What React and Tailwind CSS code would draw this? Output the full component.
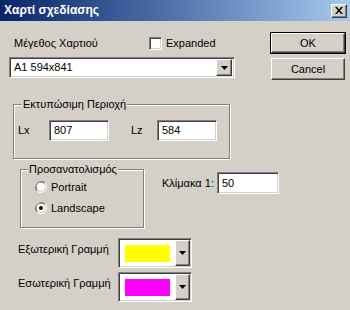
import React from "react";

const raised =
  "border border-t-white border-l-white border-b-[#404040] border-r-[#404040] shadow-[inset_-1px_-1px_0_#808080] bg-[#d4d0c8]";
const sunken =
  "border border-t-[#808080] border-l-[#808080] border-b-white border-r-white shadow-[inset_1px_1px_0_#404040,inset_-1px_-1px_0_#d4d0c8] bg-white";
const etched =
  "border border-[#808080] shadow-[inset_1px_1px_0_#fff,1px_1px_0_#fff]";

const Arrow = () => (
  <svg width="7" height="4" viewBox="0 0 7 4">
    <path d="M0 0h7L3.5 4z" fill="#000" />
  </svg>
);

const DropButton = ({ className }) => (
  <div className={`${raised} ${className} shrink-0 flex items-center justify-center`}>
    <Arrow />
  </div>
);

const Radio = ({ checked }) => (
  <svg width="12" height="12" viewBox="0 0 12 12" className="shrink-0">
    <path d="M10.2 1.8A6 6 0 0 0 1.8 10.2" stroke="#808080" strokeWidth="1" fill="none" />
    <path d="M9.5 2.5A5 5 0 0 0 2.5 9.5" stroke="#404040" strokeWidth="1" fill="none" />
    <circle cx="6" cy="6" r="4.5" fill="#fff" />
    <path d="M1.8 10.2A6 6 0 0 0 10.2 1.8" stroke="#fff" strokeWidth="1" fill="none" />
    <path d="M2.5 9.5A5 5 0 0 0 9.5 2.5" stroke="#d4d0c8" strokeWidth="1" fill="none" />
    {checked && <circle cx="6" cy="6" r="2" fill="#000" />}
  </svg>
);

const ColorRow = ({ label, color }) => (
  <div className="flex items-start">
    <span className="w-[100px] shrink-0 pt-[5px]">{label}</span>
    <div className={`${sunken} w-[74px] h-[30px] shrink-0 flex items-stretch p-[1px]`}>
      <div className="flex-1 pl-[5px] pt-[5px]">
        <div className="w-[45px] h-[17px]" style={{ backgroundColor: color }} />
      </div>
      <DropButton className="w-[15px]" />
    </div>
  </div>
);

export default function App() {
  return (
    <div
      className="w-[350px] h-[310px] bg-[#d4d0c8] text-[11px] leading-[13px] text-black overflow-hidden"
      style={{ fontFamily: "'Liberation Sans', Arial, sans-serif" }}
    >
      {/* title bar */}
      <div className="h-[21px] flex items-center justify-between bg-gradient-to-r from-[#0a246a] to-[#a6caf0] pl-[4px] pr-[3px]">
        <span className="text-white font-bold text-[12px]">Χαρτί σχεδίασης</span>
        <div className={`${raised} w-[16px] h-[14px] flex items-center justify-center`}>
          <svg width="8" height="7" viewBox="0 0 8 7">
            <path d="M0 0h2l2 2.5L6 0h2L5 3.5 8 7H6L4 4.5 2 7H0l3-3.5z" fill="#000" />
          </svg>
        </div>
      </div>

      <div className="flex">
        {/* left column */}
        <div className="ml-[9px] w-[261px] shrink-0 flex flex-col">
          <div className="mt-[16px] h-[13px] flex items-center">
            <span className="w-[140px] shrink-0 pl-[5px]">Μέγεθος Χαρτιού</span>
            <div className={`${sunken} w-[13px] h-[13px] shrink-0`} />
            <span className="ml-[4px]">Expanded</span>
          </div>

          <div className={`${sunken} mt-[7px] w-[226px] h-[21px] flex items-center p-[2px]`}>
            <span className="flex-1 pl-[2px]">A1 594x841</span>
            <DropButton className="w-[16px] h-[17px]" />
          </div>

          <fieldset className={`${etched} mt-[21px] ml-[4px] w-[217px] h-[60px] px-[4px]`}>
            <legend className="ml-[4px] px-[1px] bg-[#d4d0c8] leading-[11px]">Εκτυπώσιμη Περιοχή</legend>
            <div className="mt-[10px] flex items-center">
              <span className="w-[31px] shrink-0">Lx</span>
              <div className={`${sunken} w-[60px] h-[21px] shrink-0 flex items-center pl-[4px]`}>807</div>
              <span className="ml-[22px] w-[26px] shrink-0">Lz</span>
              <div className={`${sunken} w-[60px] h-[21px] shrink-0 flex items-center pl-[4px]`}>584</div>
            </div>
          </fieldset>

          <div className="mt-[5px] flex items-start">
            <fieldset className={`${etched} ml-[11px] w-[124px] h-[64px] shrink-0 pl-[14px]`}>
              <legend className="-ml-[7px] px-[1px] bg-[#d4d0c8] leading-[11px]">Προσανατολισμός</legend>
              <div className="mt-[4px] flex items-center gap-[4px] h-[16px]">
                <Radio />
                <span>Portrait</span>
              </div>
              <div className="mt-[5px] flex items-center gap-[4px] h-[16px]">
                <Radio checked />
                <span>Landscape</span>
              </div>
            </fieldset>
            <div className="ml-[18px] mt-[8px] shrink-0 flex items-center">
              <span className="w-[55px] shrink-0">Κλίμακα 1:</span>
              <div className={`${sunken} w-[62px] h-[22px] shrink-0 flex items-center pl-[4px]`}>50</div>
            </div>
          </div>

          <div className="mt-[10px] ml-[9px] flex flex-col gap-[4px]">
            <ColorRow label="Εξωτερική Γραμμή" color="#ffff00" />
            <ColorRow label="Εσωτερική Γραμμή" color="#ff00ff" />
          </div>
        </div>

        {/* right column */}
        <div className="mt-[11px] w-[76px] shrink-0 flex flex-col gap-[4px]">
          <div className="border border-black">
            <div className={`${raised} h-[20px] flex items-center justify-center`}>OK</div>
          </div>
          <div className={`${raised} mx-[1px] h-[22px] flex items-center justify-center`}>Cancel</div>
        </div>
      </div>
    </div>
  );
}
